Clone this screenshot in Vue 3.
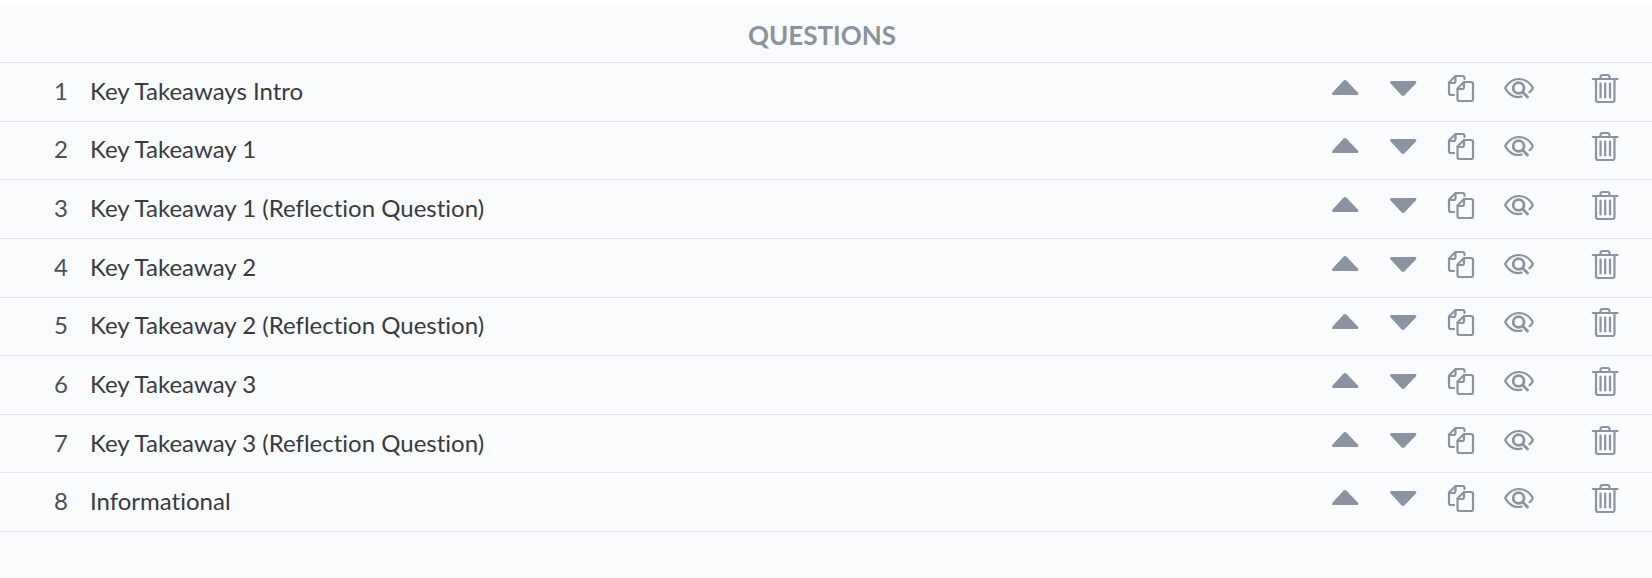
<script setup>
import { ref } from 'vue'

const questions = ref([
  { id: 1, title: 'Key Takeaways Intro' },
  { id: 2, title: 'Key Takeaway 1' },
  { id: 3, title: 'Key Takeaway 1 (Reflection Question)' },
  { id: 4, title: 'Key Takeaway 2' },
  { id: 5, title: 'Key Takeaway 2 (Reflection Question)' },
  { id: 6, title: 'Key Takeaway 3' },
  { id: 7, title: 'Key Takeaway 3 (Reflection Question)' },
  { id: 8, title: 'Informational' }
])

const move = (index, step) => {
  const target = index + step
  if (target < 0 || target >= questions.value.length) return
  const [item] = questions.value.splice(index, 1)
  questions.value.splice(target, 0, item)
}

const duplicate = (index) => {
  const { title } = questions.value[index]
  questions.value.splice(index + 1, 0, { id: Date.now(), title })
}

const remove = (index) => {
  questions.value.splice(index, 1)
}
</script>

<template>
  <main class="questions">
    <h1 class="heading">QUESTIONS</h1>
    <ol class="list">
      <li v-for="(question, index) in questions" :key="question.id" class="row">
        <span class="number">{{ index + 1 }}</span>
        <span class="title">{{ question.title }}</span>
        <div class="actions">
          <button type="button" class="action" aria-label="Move up" @click="move(index, -1)">
            <svg viewBox="0 0 30 30" class="solid">
              <path d="M2.6 19.4 L13.4 7.8 Q15 6.4 16.6 7.8 L27.8 19.4 Q29.4 22 26.8 22 H4 Q1 22 2.6 19.4 Z" />
            </svg>
          </button>
          <button type="button" class="action" aria-label="Move down" @click="move(index, 1)">
            <svg viewBox="0 0 30 30" class="solid">
              <path d="M2.6 10.6 L13.4 22.2 Q15 23.6 16.6 22.2 L27.8 10.6 Q29.4 8 26.8 8 H4 Q1 8 2.6 10.6 Z" />
            </svg>
          </button>
          <button type="button" class="action" aria-label="Duplicate" @click="duplicate(index)">
            <svg viewBox="0 0 30 30" class="outline">
              <path d="M8 22 H5 Q3 22 3 20 V9.5 L9.5 3 H16.5 Q18.5 3 18.5 5 V6" />
              <path d="M3.4 10 H7.5 Q9.5 10 9.5 8 V3.4" />
              <path d="M18 9 H25 Q27 9 27 11 V26 Q27 28 25 28 H13.5 Q11.5 28 11.5 26 V15.5 Z" />
              <path d="M11.9 16 H16 Q18 16 18 14 V9.4" />
            </svg>
          </button>
          <button type="button" class="action" aria-label="Preview">
            <svg viewBox="0 0 30 30" class="outline">
              <path d="M17.5 23.6 C10 25.4 4.5 20.4 1.6 15.8 Q1 15 1.6 14.2 C4.5 9.5 9.3 6 15 6 C20.7 6 25.5 9.5 28.4 14.2 Q29 15 28.4 15.8 Q27.2 17.7 25.5 19.3" />
              <circle cx="14.6" cy="15" r="5.4" class="thick" />
              <path d="M18.6 19 L23.5 24" class="thick" />
            </svg>
          </button>
          <button type="button" class="action delete" aria-label="Delete" @click="remove(index)">
            <svg viewBox="0 0 30 30" class="outline">
              <path d="M2.8 6 H27.5" />
              <path d="M10.5 5.8 V4 Q10.5 2 12.5 2 H17.5 Q19.5 2 19.5 4 V5.8" />
              <path d="M6 6.5 V27 Q6 29 8 29 H22.5 Q24.5 29 24.5 27 V6.5" />
              <path d="M10.5 10.5 V24.5 M15.2 10.5 V24.5 M20 10.5 V24.5" />
            </svg>
          </button>
        </div>
      </li>
    </ol>
  </main>
</template>

<style>
body {
  margin: 0;
  background: #fafbfd;
}
</style>

<style scoped>
.questions {
  border-top: 4px solid #fff;
  font-family: Lato, 'Liberation Sans', sans-serif;
  font-variant-ligatures: none;
  color: #383a44;
}

.heading {
  margin: 0;
  padding: 4px 8px 0 0;
  border-bottom: 1px solid #e4e6e9;
  font-size: 26px;
  font-weight: 700;
  line-height: 54px;
  text-align: center;
  color: #8b93a1;
}

.list {
  display: grid;
  grid-auto-rows: 1fr;
  min-height: 469px;
  margin: 0;
  padding: 0;
  list-style: none;
}

.row {
  display: flex;
  align-items: center;
  padding: 0 32px 0 48px;
  border-bottom: 1px solid #e4e6e9;
  font-size: 24px;
  line-height: 32px;
}

.number {
  width: 20px;
  padding-bottom: 2px;
  text-align: right;
  color: #4b4f5a;
}

.title {
  flex: 1;
  padding: 0 0 2px 22px;
}

.actions {
  display: flex;
  gap: 28px;
  padding-bottom: 8px;
}

.action {
  display: block;
  width: 30px;
  height: 30px;
  padding: 0;
  border: 0;
  background: none;
  color: #8b93a1;
  cursor: pointer;
}

.action:hover {
  color: #5d6675;
}

.delete {
  margin-left: 28px;
}

.action svg {
  display: block;
  width: 100%;
  height: 100%;
}

.solid {
  fill: currentColor;
}

.outline {
  fill: none;
  stroke: currentColor;
  stroke-width: 2.2;
  stroke-linecap: round;
  stroke-linejoin: round;
}

.thick {
  stroke-width: 2.8;
}
</style>
